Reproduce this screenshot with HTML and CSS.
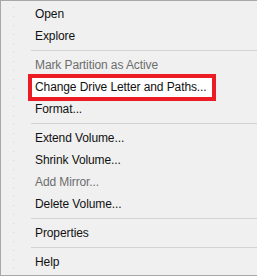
FILE: index.html
```html
<!DOCTYPE html>
<html lang="en">
<head>
  <meta charset="UTF-8" />
  <title>Disk Management - Volume Menu</title>
  <link rel="stylesheet" href="styles.css">
</head>
<body>

  <div class="menu">
    <div class="item">Open</div>
    <div class="item">Explore</div>
    <div class="sep"></div>
    <div class="item disabled">Mark Partition as Active</div>
    <div class="item"><span class="marked">Change Drive Letter and Paths...</span></div>
    <div class="item">Format...</div>
    <div class="sep"></div>
    <div class="item">Extend Volume...</div>
    <div class="item">Shrink Volume...</div>
    <div class="item disabled">Add Mirror...</div>
    <div class="item">Delete Volume...</div>
    <div class="sep"></div>
    <div class="item">Properties</div>
    <div class="sep"></div>
    <div class="item">Help</div>
  </div>

</body>
</html>
```

FILE: styles.css
```css
body {
  margin: 0;
  padding: 0;
  background: #f0f0f0;
  font-family: 'Liberation Sans', Arial, sans-serif;
  font-size: 12px;
  letter-spacing: -0.1px;
}
.menu {
  box-sizing: border-box;
  width: 257px;
  height: 276px;
  padding: 2px 0;
  border: 1px solid #a8a8a8;
  border-right: none;
  background-color: #f0f0f0;
  background-image: radial-gradient(circle, #d8d8d8 0.6px, transparent 0.9px);
  background-size: 7px 9px;
  background-repeat: repeat-y;
  background-position: 9px 2px;
}
.item {
  display: flex;
  align-items: center;
  height: 22px;
  padding-left: 34px;
  color: #111;
  white-space: nowrap;
}
.item.disabled {
  color: #6d6d6d;
}
.marked {
  display: inline-block;
  margin-left: -7px;
  padding: 0 5px 0 3px;
  height: 19px;
  line-height: 19px;
  border: 4px solid #ec1c24;
  background: #fff;
}
.sep {
  height: 7px;
  margin-left: 30px;
  position: relative;
  background: #f0f0f0;
}
.sep::after {
  content: '';
  position: absolute;
  left: 0;
  right: 0;
  top: 3px;
  border-top: 1px solid #d3d3d3;
}
```
